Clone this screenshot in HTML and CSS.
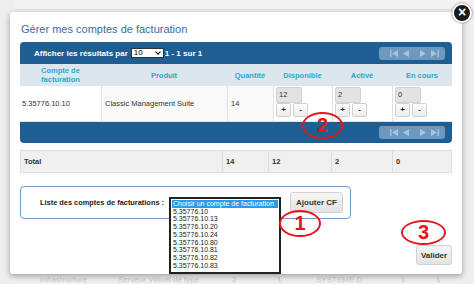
FILE: index.html
```html
<!doctype html>
<html>
    <head>
        <meta charset='utf-8'>
        <title>Gérer mes comptes de facturation</title>
        <link rel="stylesheet" href="styles.css">
    </head>
    <body>
        <div class='page-bg'>
            <div class='bg-head'></div>
            <div class='bg-row'>
                <span class='c1'>Infrastructure</span>
                <span class='c2'>Serveur Virtuel de type</span>
                <span class='c3'>2</span>
                <span class='c4'>1</span>
                <span class='c5'>SYSTEME D</span>
                <span class='c6'>1</span>
                <span class='c7'>1</span>
            </div>
        </div>

        <div class='modal'>
            <h2 class='modal-title'>Gérer mes comptes de facturation</h2>

            <div class='grid'>
                <div class='bar bar-top'>
                    <span class='bar-label'>Afficher les résultats par</span>
                    <span class='page-size'>10<i class='chev'></i></span>
                    <span class='bar-label'>1 - 1 sur 1</span>
                    <span class='pager'>
                        <svg width='66' height='13' viewBox='0 0 66 13'>
                            <g fill='#a9c3da'>
                                <rect x='11' y='3' width='1.4' height='7'/>
                                <polygon points='19,3 19,10 13,6.5'/>
                                <polygon points='30,3 30,10 24,6.5'/>
                                <polygon points='41,3 41,10 47,6.5'/>
                                <polygon points='52,3 52,10 58,6.5'/>
                                <rect x='58.6' y='3' width='1.4' height='7'/>
                            </g>
                        </svg>
                    </span>
                </div>
                <div class='row row-head'>
                    <div class='cell'>Compte de facturation</div>
                    <div class='cell'>Produit</div>
                    <div class='cell'>Quantité</div>
                    <div class='cell'>Disponible</div>
                    <div class='cell'>Activé</div>
                    <div class='cell'>En cours</div>
                </div>
                <div class='row row-body'>
                    <div class='cell first'>5.35776.10.10</div>
                    <div class='cell'>Classic Management Suite</div>
                    <div class='cell'>14</div>
                    <div class='cell counter'>
                        <span class='num'>12</span>
                        <span class='btns'><b>+</b><b>-</b></span>
                    </div>
                    <div class='cell counter'>
                        <span class='num'>2</span>
                        <span class='btns'><b>+</b><b>-</b></span>
                    </div>
                    <div class='cell counter'>
                        <span class='num'>0</span>
                        <span class='btns'><b>+</b><b>-</b></span>
                    </div>
                </div>
                <div class='bar bar-bottom'>
                    <span class='pager'>
                        <svg width='66' height='13' viewBox='0 0 66 13'>
                            <g fill='#a9c3da'>
                                <rect x='11' y='3' width='1.4' height='7'/>
                                <polygon points='19,3 19,10 13,6.5'/>
                                <polygon points='30,3 30,10 24,6.5'/>
                                <polygon points='41,3 41,10 47,6.5'/>
                                <polygon points='52,3 52,10 58,6.5'/>
                                <rect x='58.6' y='3' width='1.4' height='7'/>
                            </g>
                        </svg>
                    </span>
                </div>
            </div>

            <div class='total'>
                <div class='cell'>Total</div>
                <div class='cell'>14</div>
                <div class='cell'>12</div>
                <div class='cell'>2</div>
                <div class='cell'>0</div>
            </div>

            <div class='account-box'>
                <span class='account-label'>Liste des comptes de facturations :</span>
                <div class='account-select'>
                    <ul class='dropdown'>
                        <li class='on'>Choisir un compte de facturation</li>
                        <li>5.35776.10</li>
                        <li>5.35776.10.13</li>
                        <li>5.35776.10.20</li>
                        <li>5.35776.10.24</li>
                        <li>5.35776.10.80</li>
                        <li>5.35776.10.81</li>
                        <li>5.35776.10.82</li>
                        <li>5.35776.10.83</li>
                    </ul>
                </div>
                <button class='btn'>Ajouter CF</button>
            </div>

            <div class='actions'>
                <button class='btn'>Valider</button>
            </div>

            <span class='close'>&times;</span>
            <span class='mark mark-1'>1</span>
            <span class='mark mark-2'>2</span>
            <span class='mark mark-3'>3</span>
        </div>
    </body>
</html>
```

FILE: styles.css
```css
html,body,ul,li,h2 {
    margin:0;
    padding:0;
}
ul,li {
    list-style:none;
}
body {
    width:474px;
    height:284px;
    overflow:hidden;
    position:relative;
    background:#efefef;
    font-family:'Liberation Sans',Arial,sans-serif;
    color:#333;
}

/* page derriere la fenetre */
.page-bg {
    height:100%;
    display:flex;
    flex-direction:column;
    justify-content:space-between;
}
.bg-head {
    height:9px;
    margin-left:14px;
    border-bottom:1px solid #e6e6e6;
    background:#f3f3f3;
}
.bg-row {
    height:10px;
    position:relative;
    color:#c9c9c9;
    font-size:8px;
}
.bg-row span {
    position:absolute;
    top:1px;
}
.bg-row .c1 { left:40px; }
.bg-row .c2 { left:118px; }
.bg-row .c3 { left:232px; }
.bg-row .c4 { left:277px; }
.bg-row .c5 { left:316px; }
.bg-row .c6 { left:401px; }
.bg-row .c7 { left:436px; }

/* fenetre */
.modal {
    position:absolute;
    left:10px;
    top:12px;
    width:432px;
    height:262px;
    padding:0 10px;
    background:#fff;
    border-radius:3px;
    box-shadow:0 2px 6px rgba(0,0,0,0.35);
}
.modal-title {
    margin-top:7px;
    margin-bottom:3px;
    height:20px;
    line-height:20px;
    font-size:11px;
    font-weight:normal;
    color:#3c6c9b;
    padding-left:1px;
}

.bar {
    background:#1f5e93;
    display:flex;
    align-items:center;
    color:#fff;
}
.bar-top {
    height:22px;
    border-radius:4px 4px 0 0;
    padding:0 7px 0 14px;
}
.bar-bottom {
    height:21px;
    border-radius:0 0 4px 4px;
    justify-content:flex-end;
    padding-right:7px;
}
.bar-label {
    font-size:8px;
    font-weight:bold;
}
.page-size {
    width:29px;
    height:8px;
    margin:0 1px 0 3px;
    background:#fff;
    border:1px solid #333;
    color:#000;
    font-size:8px;
    line-height:8px;
    padding-left:2px;
    box-sizing:content-box;
    position:relative;
}
.chev {
    position:absolute;
    right:3px;
    top:1px;
    width:3px;
    height:3px;
    border-right:1.5px solid #000;
    border-bottom:1.5px solid #000;
    transform:rotate(45deg);
}
.pager {
    margin-left:auto;
    width:66px;
    height:13px;
    border-radius:3px;
    background:#6f98bf;
    display:flex;
}

.row {
    display:grid;
    grid-template-columns:81px 126px 46px 59px 60px 60px;
}
.row-head {
    height:22px;
    background:#dce6ee;
}
.row-head .cell {
    display:flex;
    align-items:center;
    justify-content:center;
    text-align:center;
    font-size:7.5px;
    font-weight:bold;
    color:#2aa9c6;
    line-height:9px;
    white-space:nowrap;
}
.row-head .cell:first-child {
    white-space:normal;
    padding:0 16px;
}
.row-body {
    height:35px;
    border-bottom:1px solid #e3e3e3;
}
.row-body .cell {
    font-size:7.5px;
    display:flex;
    align-items:center;
    padding-left:3px;
    background:#f9f9f9;
    border-left:1px solid #e2e2e2;
}
.row-body .first {
    background:#fff;
    border-left:none;
    padding-left:2px;
}
.row-body .counter {
    flex-direction:column;
    align-items:flex-start;
    justify-content:flex-start;
    padding:1px 0 0 2px;
    background:#fff;
}
.num {
    width:26px;
    height:16px;
    box-sizing:border-box;
    background:#e3e3e3;
    border:1px solid #d2d2d2;
    border-radius:2px;
    padding:2px 0 0 2px;
    font-size:7.5px;
}
.btns {
    display:flex;
    gap:2px;
}
.btns b {
    width:15px;
    height:14px;
    box-sizing:border-box;
    border:1px solid #d0d0d0;
    border-radius:2px;
    background:linear-gradient(#fff,#ececec);
    font-size:8px;
    line-height:12px;
    text-align:center;
    color:#222;
}

.total {
    margin-top:7px;
    height:23px;
    display:grid;
    grid-template-columns:201px 46px 63px 61px 61px;
    background:#f0f0f0;
    border:1px solid #dedede;
    box-sizing:border-box;
}
.total .cell {
    display:flex;
    align-items:center;
    padding-left:3px;
    font-size:7.5px;
    font-weight:bold;
    border-left:1px solid #dcdcdc;
}
.total .cell:first-child {
    border-left:none;
}

.account-box {
    margin-top:13px;
    width:331px;
    height:33px;
    box-sizing:border-box;
    border:1px solid #7198c0;
    border-radius:4px;
    display:flex;
    align-items:center;
    padding-left:19px;
}
.account-label {
    font-size:7.4px;
    font-weight:bold;
    color:#222;
    width:129px;
    white-space:nowrap;
}
.account-select {
    width:112px;
    height:22px;
    position:relative;
    align-self:flex-start;
    margin-top:10px;
}
.dropdown {
    position:absolute;
    left:0;
    top:0;
    width:112px;
    box-sizing:border-box;
    border:2px solid #222;
    background:#fff;
    padding:1px 1px 3px;
    z-index:2;
}
.dropdown li {
    font-size:7px;
    line-height:7.7px;
    color:#222;
    padding-left:1px;
    white-space:nowrap;
    overflow:hidden;
}
.dropdown li.on {
    background:#2e9ae9;
    color:#fff;
}
.btn {
    font-family:'Liberation Sans',Arial,sans-serif;
    font-size:8px;
    font-weight:bold;
    color:#333;
    border:1px solid #d2d2d2;
    border-radius:3px;
    background:linear-gradient(#f6f6f6,#e2e2e2);
    padding:0;
}
.account-box .btn {
    width:53px;
    height:21px;
    margin-left:9px;
}
.actions {
    display:flex;
    justify-content:flex-end;
    margin-top:26px;
}
.actions .btn {
    width:36px;
    height:20px;
}

/* elements superposes */
.close {
    position:absolute;
    right:-10px;
    top:-9px;
    width:16px;
    height:16px;
    border-radius:50%;
    background:#1b1b1b;
    border:2px solid #fff;
    box-shadow:0 0 2px #555;
    color:#fff;
    font-size:14px;
    font-weight:bold;
    line-height:15px;
    text-align:center;
}
.mark {
    position:absolute;
    box-sizing:border-box;
    border:2.5px solid #e8141c;
    border-radius:50%;
    color:#e8141c;
    font-size:20px;
    font-weight:bold;
    text-align:center;
    z-index:3;
}
.mark-1 {
    left:269px;
    top:198px;
    width:42px;
    height:27px;
    line-height:22px;
}
.mark-2 {
    left:292px;
    top:100px;
    width:41px;
    height:27px;
    line-height:22px;
}
.mark-3 {
    left:391px;
    top:208px;
    width:45px;
    height:25px;
    line-height:21px;
}
```
